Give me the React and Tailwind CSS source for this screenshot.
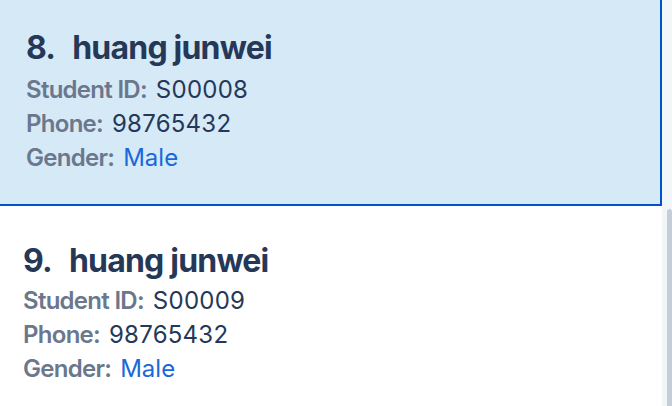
import React from "react";

const students = [
  { no: 8, name: "huang junwei", id: "S00008", phone: "98765432", gender: "Male", selected: true },
  { no: 9, name: "huang junwei", id: "S00009", phone: "98765432", gender: "Male", selected: false },
];

function Field({ label, value, accent }) {
  return (
    <div className="flex items-baseline text-[24px] leading-[34px]">
      <span className="font-semibold tracking-[-0.03em] text-[#6b778c] mr-[9px]">{label}</span>
      <span className={accent ? "text-[#1b68d8]" : "text-[#253858] tracking-[0.01em]"}>{value}</span>
    </div>
  );
}

function StudentCard({ s }) {
  return (
    <div
      className={
        s.selected
          ? "bg-[#d6e9f7] border-r-2 border-b-2 border-[#0052cc] pl-[26px] pt-[31px] pb-[29px]"
          : "bg-white pl-[23px] pt-[38px] pb-[20px] mr-[2px]"
      }
    >
      <div className="flex items-baseline text-[32px] leading-[34px] font-bold tracking-[-0.025em] text-[#253858]">
        <span className="mr-[17px]">{s.no}.</span>
        <span>{s.name}</span>
      </div>
      <div className={s.selected ? "mt-[8px]" : "mt-[6px]"}>
        <Field label="Student ID:" value={s.id} />
        <Field label="Phone:" value={s.phone} />
        <Field label="Gender:" value={s.gender} accent />
      </div>
    </div>
  );
}

export default function App() {
  return (
    <div
      className="flex h-[406px] w-[672px] overflow-hidden bg-white"
      style={{ fontFamily: "Inter, 'Noto Sans', sans-serif" }}
    >
      <div className="flex-1 flex flex-col">
        {students.map((s) => (
          <StudentCard key={s.no} s={s} />
        ))}
      </div>
      <div className="w-[10px] bg-[#f3f6f9] flex flex-col items-end pt-[209px]">
        <div className="w-[5px] flex-1 rounded-t-full bg-[#c3ced9]" />
      </div>
    </div>
  );
}
